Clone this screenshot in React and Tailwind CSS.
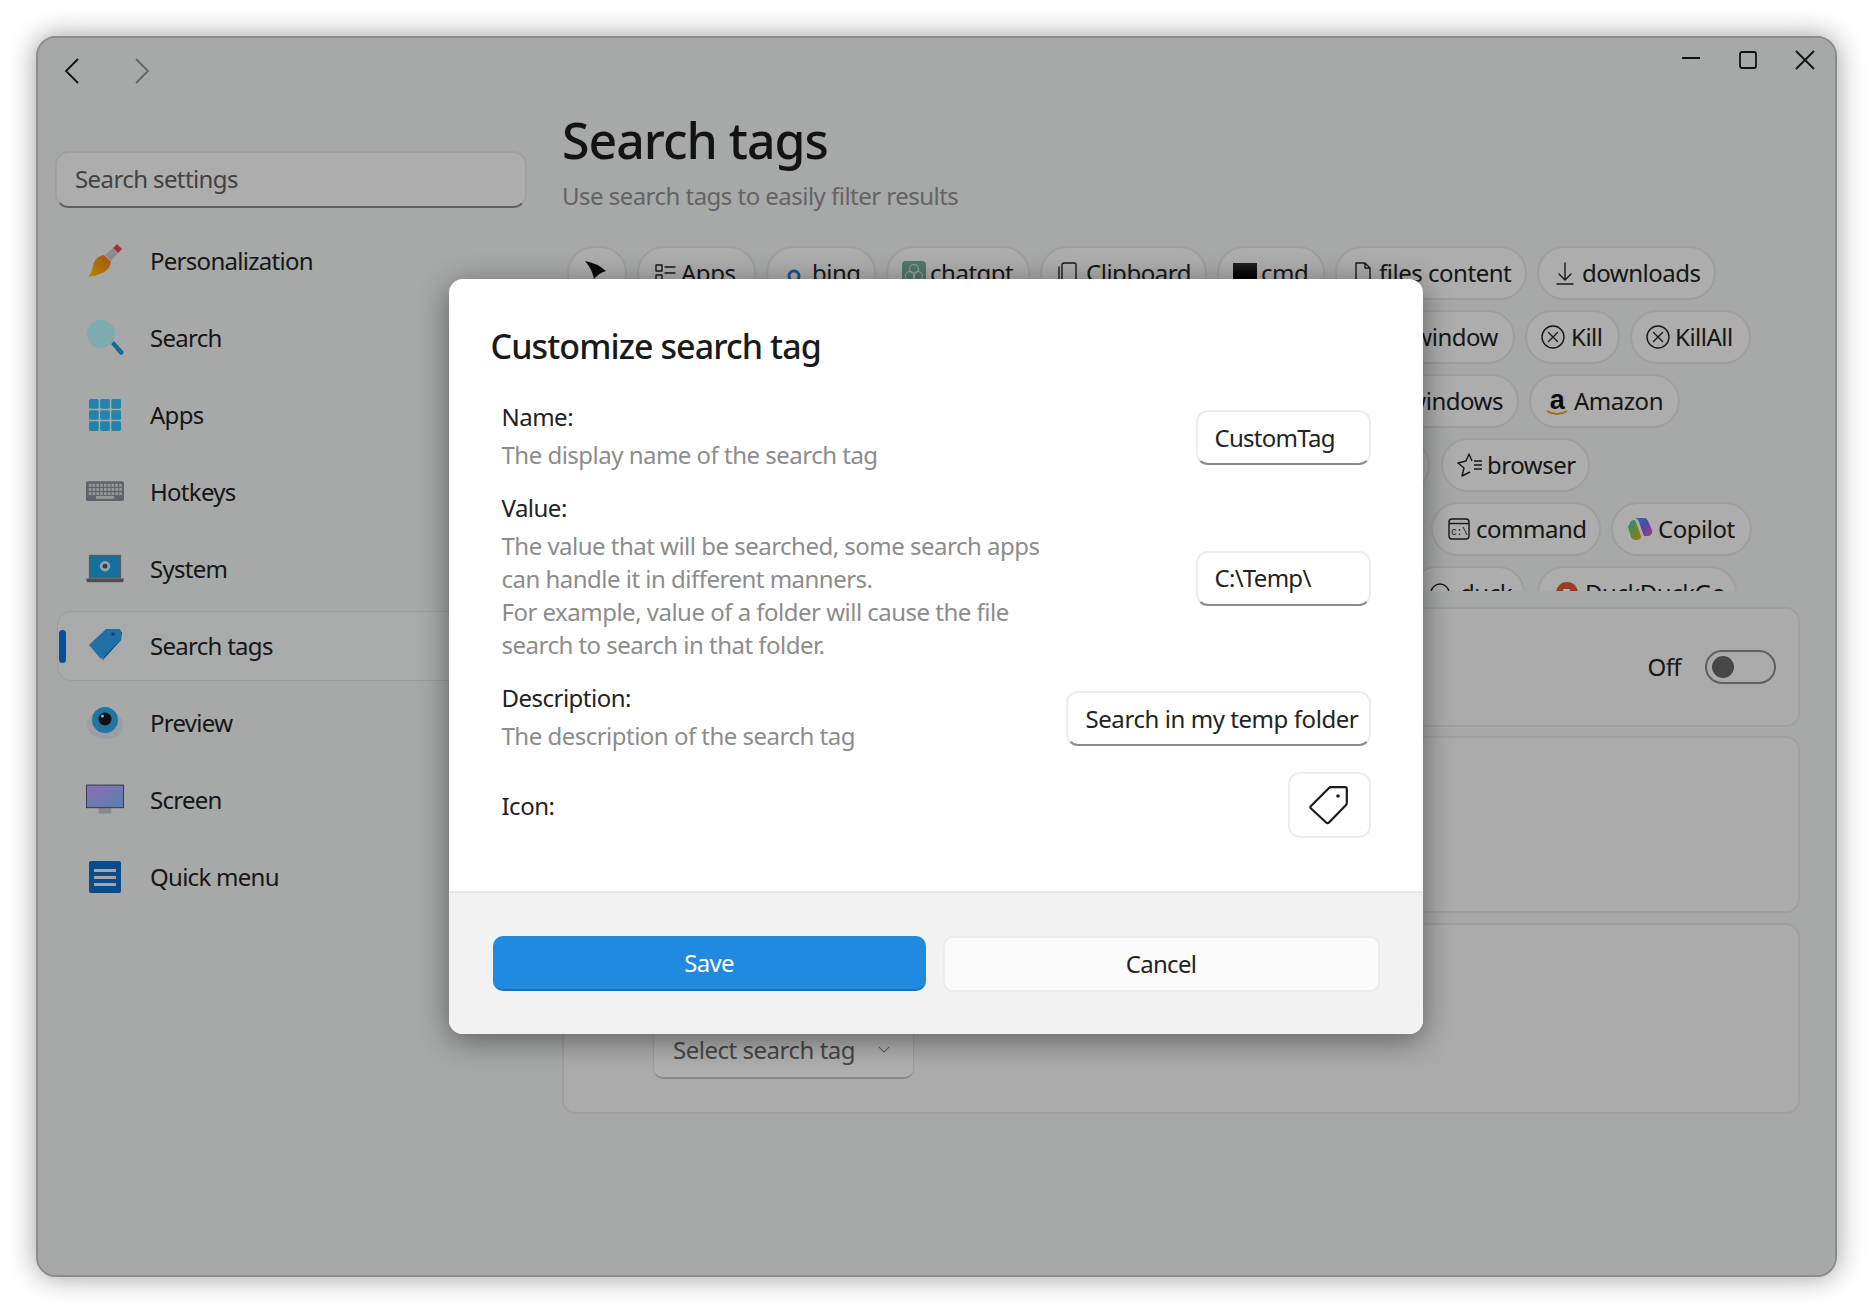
import React from "react";

function Brush() {
  return (
    <svg width="38" height="38" viewBox="0 0 38 38">
      <defs>
        <linearGradient id="brushG" x1="0" y1="1" x2="1" y2="0">
          <stop offset="0" stopColor="#ffc400" />
          <stop offset="1" stopColor="#f0751a" />
        </linearGradient>
      </defs>
      <path d="M31 2l5 5-4 4-5-5z" fill="#f0405a" />
      <path d="M27 6l5 5-7 8-6-6z" fill="#c4c8cf" />
      <path d="M18 13l7 7c-1 5-4 9-9 11-4 2-9 3-14 4 3-3 4-7 5-11 1-6 5-10 11-11z" fill="url(#brushG)" />
    </svg>
  );
}

function Magnifier() {
  return (
    <svg width="38" height="38" viewBox="0 0 38 38">
      <path d="M25 25l3-3 9 10c.8.900.8 2 0 2.800l-.5.500c-.8.800-2 .8-2.800 0z" fill="#1a9ad6" />
      <circle cx="15" cy="15" r="14" fill="#b5f5fb" />
    </svg>
  );
}

function Grid() {
  const cells = [];
  for (let y = 0; y < 3; y++) {
    for (let x = 0; x < 3; x++) {
      cells.push(<rect key={`${x}${y}`} x={x * 11.5} y={y * 11.5} width="10" height="10" rx="1.5" fill="#33bcf5" />);
    }
  }
  return (
    <svg width="32" height="32" viewBox="0 0 33 33">
      {cells}
    </svg>
  );
}

function Keyboard() {
  const keys = [];
  for (let y = 0; y < 3; y++) {
    for (let x = 0; x < 9; x++) {
      keys.push(<rect key={`${x}${y}`} x={3 + x * 4.2} y={3 + y * 4.6} width="3" height="3.2" fill="#d8dadd" />);
    }
  }
  return (
    <svg width="40" height="24" viewBox="0 0 42 24">
      <rect x="0" y="0" width="42" height="22" rx="2" fill="#8b8f96" />
      {keys}
      <rect x="11" y="16.5" width="20" height="3" fill="#d8dadd" />
    </svg>
  );
}

function Laptop() {
  return (
    <svg width="40" height="30" viewBox="0 0 40 30">
      <rect x="3" y="0" width="34" height="25" rx="1" fill="#80858c" />
      <rect x="4.5" y="1.5" width="31" height="22" fill="#1e9fe0" />
      <circle cx="20" cy="12" r="5.5" fill="#dfe4ea" />
      <circle cx="20" cy="12" r="2.6" fill="#2a5f9e" />
      <path d="M0 25h40l-1 4H1z" fill="#6c7178" />
    </svg>
  );
}

function BlueTag() {
  return (
    <svg width="36" height="36" viewBox="0 0 36 36">
      <path d="M15 33l19-21 1-8-7-2z" fill="#0f62b8" />
      <path d="M2 17L19 1h13c1 0 2 1 2 2v8L16 30c-1 1-2 1-3 0z" fill="#2fa0ec" />
      <circle cx="26" cy="6" r="1.8" fill="#0f62b8" />
    </svg>
  );
}

function Eye() {
  return (
    <svg width="38" height="34" viewBox="0 0 38 34">
      <ellipse cx="19" cy="19" rx="18" ry="14" fill="#dfe3e8" />
      <circle cx="19" cy="14" r="13" fill="#2fa8e8" />
      <circle cx="19" cy="13" r="6.5" fill="#15181c" />
      <circle cx="16.5" cy="10" r="1.5" fill="#ffffff" />
    </svg>
  );
}

function Monitor() {
  return (
    <svg width="42" height="34" viewBox="0 0 42 34">
      <defs>
        <linearGradient id="monG" x1="0" y1="0" x2="1" y2="1">
          <stop offset="0" stopColor="#c9a0ff" />
          <stop offset="1" stopColor="#80b5ff" />
        </linearGradient>
      </defs>
      <rect x="14" y="24" width="14" height="8" fill="#c4c6ca" />
      <rect x="0.5" y="0.5" width="41" height="25" fill="url(#monG)" stroke="#3b4a66" />
    </svg>
  );
}

function MenuIcon() {
  return (
    <svg width="32" height="32" viewBox="0 0 32 32">
      <rect x="0" y="0" width="32" height="32" rx="2" fill="#0f6ec8" />
      <rect x="5" y="8" width="22" height="3" fill="#e8eef5" />
      <rect x="5" y="15" width="22" height="3" fill="#e8eef5" />
      <rect x="5" y="22" width="22" height="3" fill="#e8eef5" />
    </svg>
  );
}

const navItems = [
  { label: "Personalization", icon: <Brush /> },
  { label: "Search", icon: <Magnifier /> },
  { label: "Apps", icon: <Grid /> },
  { label: "Hotkeys", icon: <Keyboard /> },
  { label: "System", icon: <Laptop /> },
  { label: "Search tags", icon: <BlueTag />, active: true },
  { label: "Preview", icon: <Eye /> },
  { label: "Screen", icon: <Monitor /> },
  { label: "Quick menu", icon: <MenuIcon /> },
];

function NavItem({ item }) {
  return (
    <div
      className={`relative ml-[2px] flex h-[70px] items-center gap-[26px] rounded-[14px] border pl-[28px] ${
        item.active ? "border-[#dfe2e2] bg-[#f2f4f4]" : "border-transparent"
      }`}
    >
      {item.active && <div className="absolute left-[1px] top-[18px] h-[33px] w-[7px] rounded-full bg-[#0772e0]" />}
      <div className="flex w-[38px] items-center justify-center">{item.icon}</div>
      <span className="text-[24px] tracking-[-0.03em] text-[#222]">{item.label}</span>
    </div>
  );
}

function Chip({ className, children }) {
  return (
    <div
      className={`flex h-[54px] shrink-0 items-center rounded-full border-2 border-[#e2e2e2] bg-[#f8f8f8] text-[24px] tracking-[-0.02em] text-[#222] ${className}`}
    >
      {children}
    </div>
  );
}

function Line({ children }) {
  return (
    <svg width="24" height="24" viewBox="0 0 24 24" fill="none" stroke="#222" strokeWidth="1.4" strokeLinecap="round" strokeLinejoin="round">
      {children}
    </svg>
  );
}

function XCircle() {
  return (
    <Line>
      <circle cx="12" cy="12" r="11" />
      <path d="M7.5 7.5l9 9M16.5 7.5l-9 9" />
    </Line>
  );
}

function Copilot() {
  return (
    <svg width="26" height="24" viewBox="0 0 26 24">
      <defs>
        <linearGradient id="copA" x1="0" y1="0" x2="1" y2="1">
          <stop offset="0" stopColor="#2fb5f0" />
          <stop offset="0.5" stopColor="#7a5ff0" />
          <stop offset="1" stopColor="#f0609a" />
        </linearGradient>
        <linearGradient id="copB" x1="0" y1="0" x2="1" y2="1">
          <stop offset="0" stopColor="#35b8e8" />
          <stop offset="0.45" stopColor="#7cc84a" />
          <stop offset="1" stopColor="#f5a030" />
        </linearGradient>
      </defs>
      <path d="M8 1h9c2 0 3 1 4 3l4 9c1 3-1 6-4 6h-4l-3-8-2-6c-.5-1.500-2-3-4-4z" fill="url(#copA)" />
      <path d="M1 10l2-4c1-2 2-3 5-3l2 5 4 11c.5 1.500-1 4-4 4H8c-2 0-3-1-4-3z" fill="url(#copB)" />
    </svg>
  );
}

function TagRows() {
  return (
    <div className="mt-[34px] flex h-[345px] flex-col gap-[10px] overflow-hidden pl-[5px]">
      <div className="flex gap-[10px]">
        <Chip className="w-[60px] justify-center">
          <svg width="24" height="24" viewBox="0 0 24 24">
            <path d="M0 0Q12 2 21 10 14 12 9 18 7 8 0 0z" fill="#111" />
          </svg>
        </Chip>
        <Chip className="w-[119px] gap-[4px] pl-[14px]">
          <Line>
            <path d="M3 4h6v6H3zM3 14h6v6H3zM12 6h10M12 12h10" />
          </Line>
          Apps
        </Chip>
        <Chip className="w-[110px] gap-[8px] pl-[16px]">
          <svg width="20" height="24" viewBox="0 0 20 24" fill="none" stroke="#2a78c8" strokeWidth="3">
            <circle cx="10" cy="15" r="5" />
          </svg>
          bing
        </Chip>
        <Chip className="w-[144px] gap-[4px] pl-[14px]">
          <svg width="24" height="24" viewBox="0 0 24 24" fill="none" stroke="#d6ece6" strokeWidth="1.2">
            <rect width="24" height="24" rx="4" fill="#74aa9c" stroke="none" />
            <circle cx="12" cy="8" r="4.500" />
            <circle cx="8" cy="15" r="4.500" />
            <circle cx="16" cy="15" r="4.500" />
          </svg>
          chatgpt
        </Chip>
        <Chip className="w-[167px] gap-[6px] pl-[14px]">
          <Line>
            <rect x="6" y="2" width="14" height="20" rx="2" />
            <path d="M3 6v14" />
          </Line>
          Clipboard
        </Chip>
        <Chip className="w-[108px] gap-[4px] pl-[14px]">
          <div className="h-[20px] w-[24px] bg-linear-to-b from-[#333] to-black" />
          cmd
        </Chip>
        <Chip className="w-[192px] gap-[4px] pl-[14px]">
          <Line>
            <path d="M5 2h9l5 5v15H5zM14 2v5h5" />
          </Line>
          files content
        </Chip>
        <Chip className="w-[179px] gap-[5px] pl-[14px]">
          <Line>
            <path d="M12 2v17M6 13l6 6 6-6M4 23h16" />
          </Line>
          downloads
        </Chip>
      </div>
      <div className="ml-[733px] flex gap-[10px]">
        <Chip className="w-[215px] justify-end pr-[15px]">window</Chip>
        <Chip className="w-[95px] gap-[6px] pl-[14px]">
          <XCircle />
          Kill
        </Chip>
        <Chip className="w-[121px] gap-[5px] pl-[14px]">
          <XCircle />
          KillAll
        </Chip>
      </div>
      <div className="ml-[733px] flex gap-[10px]">
        <Chip className="w-[219px] justify-end pr-[14px]">windows</Chip>
        <Chip className="w-[151px] gap-[6px] pl-[15px]">
          <span className="relative flex h-[26px] w-[22px] justify-center font-['Liberation_Sans',sans-serif] text-[27px] leading-[24px] font-bold text-[#111]">
            a
            <svg className="absolute bottom-[-3px] left-0" width="22" height="8" viewBox="0 0 22 8" fill="none" stroke="#f09a1a" strokeWidth="2">
              <path d="M1 2c6 4 14 4 20 0" />
            </svg>
          </span>
          Amazon
        </Chip>
      </div>
      <div className="ml-[733px] flex gap-[11px]">
        <Chip className="w-[130px]" />
        <Chip className="w-[149px] gap-[4px] pl-[14px]">
          <svg width="26" height="24" viewBox="0 0 26 24" fill="none" stroke="#222" strokeWidth="1.4" strokeLinejoin="round">
            <path d="M15 8L12 1 9 8 1 10l6 5-2 8 8-4" />
            <path d="M17 8h8M17 12h8M17 16h8" />
          </svg>
          browser
        </Chip>
      </div>
      <div className="ml-[733px] flex gap-[10px]">
        <Chip className="w-[121px]" />
        <Chip className="w-[170px] gap-[5px] pl-[14px]">
          <svg width="24" height="24" viewBox="0 0 24 24" fill="none" stroke="#222" strokeWidth="1.4">
            <rect x="2" y="2" width="20" height="20" rx="3" />
            <path d="M2 6.500h20" />
            <text x="4" y="18" fontSize="10" fill="#222" stroke="none" fontFamily="Liberation Mono, monospace">c:\</text>
          </svg>
          command
        </Chip>
        <Chip className="w-[141px] gap-[5px] pl-[14px]">
          <Copilot />
          Copilot
        </Chip>
      </div>
      <div className="ml-[843px] flex gap-[12px]">
        <Chip className="w-[115px] gap-[8px] pl-[16px]">
          <Line>
            <circle cx="12" cy="12" r="9" />
          </Line>
          duck
        </Chip>
        <Chip className="w-[200px] gap-[6px] pl-[16px]">
          <svg width="24" height="24" viewBox="0 0 24 24">
            <circle cx="12" cy="12" r="11" fill="#de5833" />
            <path d="M8 8h7l-2 12H10z" fill="#fff" />
          </svg>
          DuckDuckGo
        </Chip>
      </div>
    </div>
  );
}

function Main() {
  return (
    <div className="ml-[35px] flex w-[1238px] flex-col pt-[10px]">
      <h1 className="text-[50px] leading-[60px] font-medium tracking-[-0.02em] text-[#1c1c1c]">Search tags</h1>
      <p className="mt-[9px] text-[24px] leading-[33px] tracking-[-0.022em] text-[#8f8f8f]">Use search tags to easily filter results</p>
      <TagRows />
      <div className="mt-[16px] flex h-[120px] items-center justify-end gap-[24px] rounded-[14px] border-2 border-[#e4e4e4] bg-[#f5f5f5] pr-[22px]">
        <span className="text-[24px] tracking-[-0.024em] text-[#222]">Off</span>
        <div className="flex h-[34px] w-[71px] items-center rounded-full border-2 border-[#8a8a8a] pl-[5px]">
          <div className="h-[22px] w-[22px] rounded-full bg-[#666]" />
        </div>
      </div>
      <div className="mt-[9px] h-[177px] rounded-[14px] border-2 border-[#e4e4e4] bg-[#f5f5f5]" />
      <div className="mt-[10px] flex h-[191px] items-end rounded-[14px] border-2 border-[#e4e4e4] bg-[#f5f5f5] pb-[33px] pl-[89px]">
        <div className="flex h-[55px] w-[261px] items-center justify-between rounded-[10px] border border-b-2 border-[#e2e2e2] border-b-[#c4c4c4] bg-[#fbfbfb] pr-[23px] pb-[2px] pl-[19px]">
          <span className="text-[24px] tracking-[-0.02em] text-[#666]">Select search tag</span>
          <svg width="12" height="8" viewBox="0 0 14 9" fill="none" stroke="#777" strokeWidth="1.2">
            <path d="M1 1l6 6 6-6" />
          </svg>
        </div>
      </div>
    </div>
  );
}

function Field({ value, className }) {
  return (
    <div
      className={`mt-[4px] flex h-[55px] items-center rounded-[12px] border-2 border-b-2 border-[#ececec] border-b-[#8c8c8c] bg-white text-[24px] text-[#222] ${className}`}
    >
      {value}
    </div>
  );
}

function Label({ title, lines }) {
  return (
    <div className="leading-[33px] tracking-[-0.032em]">
      <div className="text-[24px] text-[#222]">{title}</div>
      {lines && (
        <div className="mt-[5px] text-[24px] text-[#8c8c8c]">
          {lines.map((line) => (
            <div key={line}>{line}</div>
          ))}
        </div>
      )}
    </div>
  );
}

function Modal() {
  return (
    <div className="flex h-[755px] w-[974px] flex-col overflow-hidden rounded-[14px] bg-white shadow-[0_6px_30px_rgba(0,0,0,0.45)]">
      <div className="flex h-[612px] flex-col pt-[44px] pr-[52px] pl-[42px]">
        <h2 className="text-[34px] leading-[46px] font-medium tracking-[-0.027em] text-[#1a1a1a]">Customize search tag</h2>
        <div className="mt-[31px] flex flex-col gap-[20px] pl-[11px]">
          <div className="flex items-center justify-between">
            <Label title="Name:" lines={["The display name of the search tag"]} />
            <Field value="CustomTag" className="w-[175px] pl-[17px] tracking-[-0.03em]" />
          </div>
          <div className="flex items-center justify-between">
            <Label
              title="Value:"
              lines={[
                "The value that will be searched, some search apps",
                "can handle it in different manners.",
                "For example, value of a folder will cause the file",
                "search to search in that folder.",
              ]}
            />
            <Field value="C:\Temp\" className="w-[175px] pl-[17px] tracking-[-0.03em]" />
          </div>
          <div className="flex items-center justify-between">
            <Label title="Description:" lines={["The description of the search tag"]} />
            <Field value="Search in my temp folder" className="w-[305px] pl-[18px] tracking-[-0.018em]" />
          </div>
          <div className="flex items-center justify-between">
            <Label title="Icon:" />
            <div className="flex h-[66px] w-[83px] items-center justify-center rounded-[12px] border-2 border-[#ececec] bg-white">
              <svg width="40" height="40" viewBox="0 0 40 40" fill="none" stroke="#1a1a1a" strokeWidth="2.2" strokeLinejoin="round">
                <path d="M2 21L20 3c.6-.6 1.2-.8 2-.8h14c1 0 1.8.8 1.8 1.8v14c0 .8-.3 1.5-.8 2L20 37.5c-.8.8-2 .8-2.8 0L2 23.5c-.7-.7-.7-1.800 0-2.500z" />
                <circle cx="29" cy="11" r="1.800" fill="#1a1a1a" stroke="none" />
              </svg>
            </div>
          </div>
        </div>
      </div>
      <div className="flex flex-1 items-center gap-[17px] border-t-2 border-[#e8e8e8] bg-[#f2f2f2] pr-[43px] pl-[44px]">
        <button className="h-[55px] flex-1 rounded-[10px] border-b-2 border-[#1a6fb5] bg-[#1f8ae0] text-[24px] tracking-[-0.03em] text-white">Save</button>
        <button className="h-[56px] flex-1 rounded-[10px] border-2 border-[#ebebeb] bg-[#fbfbfb] text-[24px] tracking-[-0.03em] text-[#222]">Cancel</button>
      </div>
    </div>
  );
}

export default function App() {
  return (
    <div className="h-[1312px] w-[1872px] bg-white p-[36px] font-['Noto_Sans',sans-serif]">
      <div className="relative h-[1241px] w-[1801px] overflow-hidden rounded-[20px] border-2 border-[#8c8c8c] bg-[#eff2f2] shadow-[0_0_28px_rgba(0,0,0,0.4)]">
        <div className="flex h-[62px] justify-between">
          <div className="flex items-center gap-[56px] pt-[3px] pl-[27px]">
            <svg width="14" height="26" viewBox="0 0 14 26" fill="none" stroke="#1a1a1a" strokeWidth="1.800">
              <path d="M13 1L1 13l12 12" />
            </svg>
            <svg width="14" height="26" viewBox="0 0 14 26" fill="none" stroke="#8f8f8f" strokeWidth="1.800">
              <path d="M1 1l12 12L1 25" />
            </svg>
          </div>
          <div className="flex gap-[37px] pt-[12px] pr-[20px]">
            <svg width="20" height="20" viewBox="0 0 20 20" fill="none" stroke="#1a1a1a" strokeWidth="1.800">
              <path d="M1 8h18" />
            </svg>
            <svg width="20" height="20" viewBox="0 0 20 20" fill="none" stroke="#1a1a1a" strokeWidth="1.800">
              <rect x="2" y="2" width="16" height="16" rx="2" />
            </svg>
            <svg width="20" height="20" viewBox="0 0 20 20" fill="none" stroke="#1a1a1a" strokeWidth="1.800">
              <path d="M1 1l18 18M19 1L1 19" />
            </svg>
          </div>
        </div>
        <div className="flex">
          <div className="ml-[17px] flex w-[472px] flex-col pt-[51px]">
            <div className="flex h-[57px] items-center rounded-[14px] border-2 border-b-2 border-[#e4e6e6] border-b-[#8a8a8a] bg-[#f8f8f8] pb-[2px] pl-[18px] text-[24px] tracking-[-0.025em] text-[#5f5f5f]">
              Search settings
            </div>
            <div className="mt-[18px] flex flex-col gap-[7px]">
              {navItems.map((item) => (
                <NavItem key={item.label} item={item} />
              ))}
            </div>
          </div>
          <Main />
        </div>
        <div className="absolute inset-0 flex items-center justify-center bg-black/30 pr-[2px]">
          <Modal />
        </div>
      </div>
    </div>
  );
}
